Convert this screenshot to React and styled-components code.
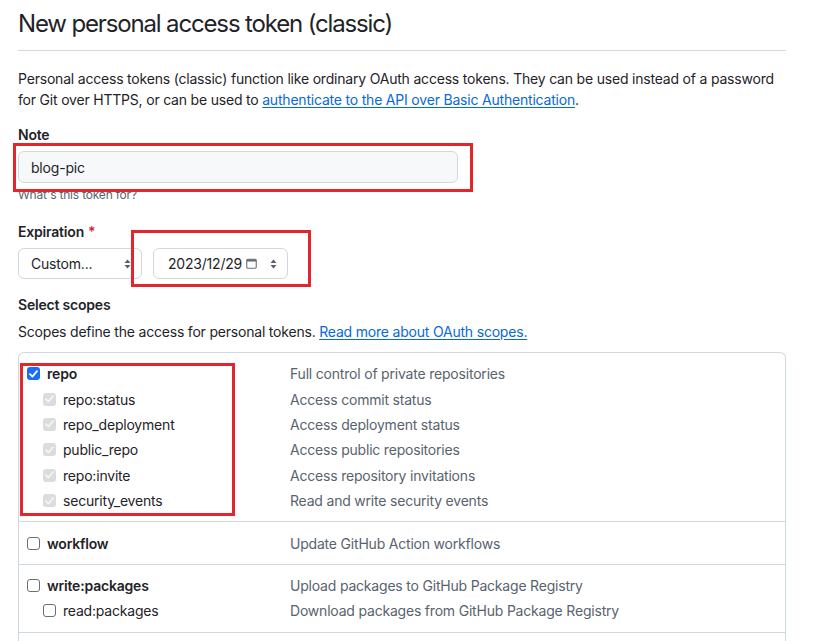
import React from "react";
import styled, { createGlobalStyle } from "styled-components";

const GlobalStyle = createGlobalStyle`
    body {
        margin: 0;
        background: #ffffff;
        font-family: Inter, "Liberation Sans", Arial, sans-serif;
        color: #1f2328;
        font-size: 14px;
        line-height: 21px;
        letter-spacing: -0.2px;
    }
`;

const Page = styled.div`
    width: 768px;
    padding: 6px 0 0 18px;
`;

const Subhead = styled.div`
    padding-bottom: 8px;
    border-bottom: 1px solid #d1d9e0;
`;

const Title = styled.h2`
    margin: 0;
    font-size: 24px;
    line-height: 36px;
    font-weight: 400;
    letter-spacing: -1.15px;
    color: #1f2328;
`;

const Intro = styled.p`
    margin: 17px 0 0;
    font-size: 14px;
    line-height: 21px;
`;

const Link = styled.a`
    color: #0969da;
    text-decoration: underline;
    text-underline-offset: 2px;
`;

const FieldGroup = styled.div`
    margin-top: ${props => props.mt || "14px"};
`;

const Label = styled.div`
    font-weight: 600;
    font-size: 14px;
    line-height: 21px;
`;

const Required = styled.span`
    color: #d1242f;
    margin-left: 4px;
`;

const Annotated = styled.div`
    position: relative;
    display: ${props => props.inline ? "inline-block" : "block"};
`;

const RedBox = styled.div`
    position: absolute;
    left: ${props => props.l}px;
    top: ${props => props.t}px;
    width: ${props => props.w}px;
    height: ${props => props.h}px;
    border: 3px solid #e3262c;
    box-sizing: border-box;
    z-index: 2;
    pointer-events: none;
`;

const TextInput = styled.div`
    margin-top: 6px;
    width: 440px;
    height: 32px;
    box-sizing: border-box;
    padding: 0 12px;
    display: flex;
    align-items: center;
    background: #f6f8fa;
    border: 1px solid #d1d9e0;
    border-radius: 6px;
    font-size: 14px;
`;

const Note = styled.div`
    margin-top: 3px;
    font-size: 12px;
    line-height: 18px;
    color: #59636e;
    position: relative;
    z-index: 1;
`;

const SelectRow = styled.div`
    margin-top: 6px;
    display: flex;
    gap: 11px;
`;

const Select = styled.div`
    width: ${props => props.w}px;
    height: 31px;
    box-sizing: border-box;
    padding: 0 10px 0 ${props => props.pl}px;
    display: flex;
    align-items: center;
    background: #ffffff;
    border: 1px solid #d1d9e0;
    border-radius: 6px;
    font-size: 14px;
    color: #1f2328;
`;

const SelectText = styled.span`
    flex: 1;
`;

const Subtle = styled.p`
    margin: 6px 0 0;
    font-size: 14px;
    line-height: 21px;
`;

const ScopeBox = styled.div`
    margin-top: 10px;
    padding-bottom: 20px;
    border: 1px solid #d1d9e0;
    border-bottom: none;
    border-radius: 6px 6px 0 0;
`;

const Group = styled.div`
    position: relative;
    padding: 8px;
    border-top: ${props => props.first ? "none" : "1px solid #d1d9e0"};
    border-bottom: ${props => props.last ? "1px solid #d1d9e0" : "none"};
`;

const Row = styled.div`
    display: grid;
    grid-template-columns: 263px 1fr;
    height: 25.4px;
    align-items: center;
`;

const Name = styled.label`
    display: flex;
    align-items: center;
    gap: 7px;
    padding-left: ${props => props.child ? "16px" : "0"};
    font-weight: ${props => props.child ? 400 : 600};
    color: #1f2328;
`;

const Desc = styled.span`
    color: #59636e;
`;

const Box = styled.span`
    width: 13px;
    height: 13px;
    box-sizing: border-box;
    border-radius: 3px;
    display: inline-flex;
    align-items: center;
    justify-content: center;
    flex-shrink: 0;
    background: ${props => props.state === "on" ? "#1a6ef5" : props.state === "dim" ? "#dcdcdc" : "#ffffff"};
    border: ${props => props.state === "off" ? "1px solid #6e6e6e" : "none"};
`;

function UpDown() {
    return (
        <svg width="7" height="10" viewBox="0 0 7 10">
            <path d="M3.5 0.5 L6.5 4 H0.5 Z" fill="#5a5f66" />
            <path d="M3.5 9.5 L6.5 6 H0.5 Z" fill="#5a5f66" />
        </svg>
    );
}

function Calendar() {
    return (
        <svg width="11" height="11" viewBox="0 0 11 11" style={{ marginRight: 13 }}>
            <rect x="0.75" y="1.25" width="9.5" height="9" rx="1.2" fill="none" stroke="#6b6f75" strokeWidth="1.1" />
            <rect x="0.75" y="1.25" width="9.5" height="2.3" fill="#6b6f75" />
        </svg>
    );
}

function Check({ state }) {
    return (
        <Box state={state}>
            {state !== "off" && (
                <svg width="9" height="8" viewBox="0 0 9 8">
                    <path d="M1 4.2 L3.4 6.6 L8 1.2" fill="none" stroke={state === "on" ? "#ffffff" : "#f4f4f4"} strokeWidth="1.8" strokeLinecap="round" strokeLinejoin="round" />
                </svg>
            )}
        </Box>
    );
}

const groups = [
    {
        mark: true,
        rows: [
            { name: "repo", desc: "Full control of private repositories", state: "on" },
            { name: "repo:status", desc: "Access commit status", state: "dim", child: true },
            { name: "repo_deployment", desc: "Access deployment status", state: "dim", child: true },
            { name: "public_repo", desc: "Access public repositories", state: "dim", child: true },
            { name: "repo:invite", desc: "Access repository invitations", state: "dim", child: true },
            { name: "security_events", desc: "Read and write security events", state: "dim", child: true }
        ]
    },
    {
        rows: [
            { name: "workflow", desc: "Update GitHub Action workflows", state: "off" }
        ]
    },
    {
        rows: [
            { name: "write:packages", desc: "Upload packages to GitHub Package Registry", state: "off" },
            { name: "read:packages", desc: "Download packages from GitHub Package Registry", state: "off", child: true }
        ]
    }
];

function App() {
    return (
        <>
            <GlobalStyle />
            <Page>
                <Subhead>
                    <Title>New personal access token (classic)</Title>
                </Subhead>

                <Intro>
                    Personal access tokens (classic) function like ordinary OAuth access tokens. They can be used instead of a password<br />
                    for Git over HTTPS, or can be used to <Link>authenticate to the API over Basic Authentication</Link>.
                </Intro>

                <FieldGroup>
                    <Label>Note</Label>
                    <Annotated>
                        <TextInput>blog-pic</TextInput>
                        <RedBox l={-5} t={-8} w={460} h={49} />
                    </Annotated>
                    <Note>What's this token for?</Note>
                </FieldGroup>

                <FieldGroup mt="17px">
                    <Label>Expiration<Required>*</Required></Label>
                    <SelectRow>
                        <Select w={124} pl={12}>
                            <SelectText>Custom...</SelectText>
                            <UpDown />
                        </Select>
                        <Annotated inline>
                            <Select w={135} pl={14}>
                                <SelectText>2023/12/29</SelectText>
                                <Calendar />
                                <UpDown />
                            </Select>
                            <RedBox l={-22} t={-18} w={180} h={57} />
                        </Annotated>
                    </SelectRow>
                </FieldGroup>

                <FieldGroup mt="15px">
                    <Label>Select scopes</Label>
                    <Subtle>
                        Scopes define the access for personal tokens. <Link>Read more about OAuth scopes.</Link>
                    </Subtle>
                    <ScopeBox>
                        {groups.map((group, gi) => (
                            <Group key={gi} first={gi === 0} last={gi === groups.length - 1}>
                                {group.rows.map((row, ri) => (
                                    <Row key={ri}>
                                        <Name child={row.child}>
                                            <Check state={row.state} />
                                            {row.name}
                                        </Name>
                                        <Desc>{row.desc}</Desc>
                                    </Row>
                                ))}
                                {group.mark && <RedBox l={1} t={10} w={215} h={153} />}
                            </Group>
                        ))}
                    </ScopeBox>
                </FieldGroup>
            </Page>
        </>
    );
}

export default App;
